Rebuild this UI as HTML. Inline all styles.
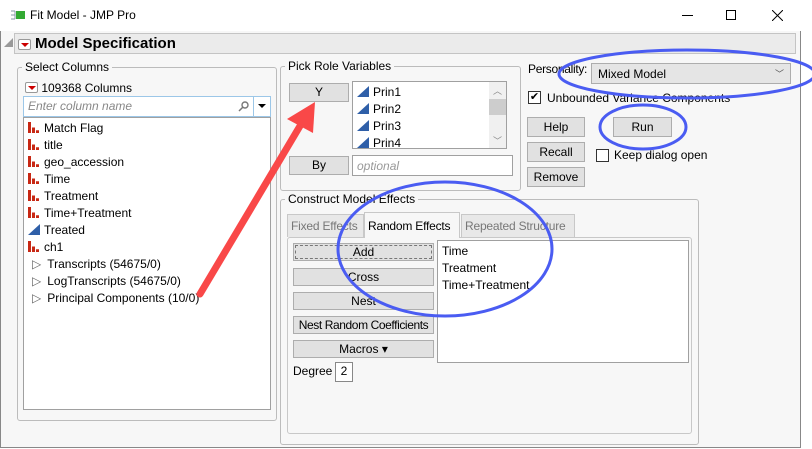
<!DOCTYPE html>
<html><head><meta charset="utf-8"><style>
*{margin:0;padding:0;box-sizing:border-box}
body{width:812px;height:449px;position:relative;overflow:hidden;background:#fff;font-family:"Liberation Sans",sans-serif;font-size:12px;color:#000;white-space:nowrap}
.a{position:absolute}
.win{left:0;top:0;width:801px;height:448px;background:#f7f7f7;border:1px solid #888;border-top:none}
.grp{position:absolute;border:1px solid #bcbcbc;border-radius:3px}
.lg{position:absolute;background:#f7f7f7;padding:0 3px;top:-8px;left:4px;white-space:nowrap}
.btn{position:absolute;background:#e1e1e1;border:1px solid #adadad;text-align:center;line-height:16px;font-size:12px;white-space:nowrap;overflow:hidden}
.box{position:absolute;background:#fff;border:1px solid #a0a0a0}
.bar{display:inline-block;width:11px;height:11px;margin-right:5px;vertical-align:-1px;background:linear-gradient(to right,#c82814 0 3px,transparent 3px 4px,#c82814 4px 7px,transparent 7px 8px,#c82814 8px 11px);clip-path:polygon(0 0,3px 0,3px 30%,4px 30%,4px 50%,7px 50%,7px 70%,8px 70%,8px 75%,11px 75%,11px 100%,0 100%)}
.tri{display:inline-block;width:12px;height:11px;margin-right:4px;vertical-align:-1px;background:#2f5fa8;clip-path:polygon(100% 0,100% 100%,0 100%)}
.row{height:17px;line-height:17px;white-space:nowrap}
.dd{display:inline-block;width:13px;height:11px;background:#fff;border:1px solid #999;border-radius:2px;position:relative;vertical-align:-1px}
.dd:after{content:"";position:absolute;left:2px;top:3px;border-left:4px solid transparent;border-right:4px solid transparent;border-top:4px solid #c00}
.tab{position:absolute;top:214px;height:23px;border:1px solid #c8c8c8;border-bottom:none;background:#e8e8e8;color:#777;line-height:22px;padding:0 3px;white-space:nowrap;overflow:hidden;letter-spacing:-0.2px}
</style></head><body>
<div class="a win"></div>
<div class="a" style="left:801px;top:0;width:11px;height:449px;background:#fff"></div>
<div class="a" style="left:0;top:0;width:801px;height:31px;background:#fff"></div>
<svg class="a" style="left:10px;top:8px" width="16" height="14"><path d="M1 3h4M1 7h4M1 11h4M5 3v8" stroke="#89a" fill="none"/><rect x="6" y="3" width="9" height="8" fill="#3a3"/></svg>
<div class="a" style="left:30px;top:8px;font-size:12px">Fit Model - JMP Pro</div>
<div class="a" style="left:682px;top:15px;width:11px;height:1px;background:#000"></div>
<div class="a" style="left:726px;top:10px;width:10px;height:10px;border:1px solid #000"></div>
<svg class="a" style="left:772px;top:10px" width="11" height="11"><path d="M0 0L11 11M11 0L0 11" stroke="#000"/></svg>
<div class="a" style="left:4px;top:38px;width:0;height:0;border-left:9px solid transparent;border-bottom:9px solid #999"></div>
<div class="a" style="left:14px;top:33px;width:782px;height:21px;background:#ebebeb;border:1px solid #c4c4c4"></div>
<div class="a" style="left:18px;top:38px"><span class="dd"></span></div>
<div class="a" style="left:35px;top:34px;font-size:15px;font-weight:bold;line-height:19px">Model Specification</div>
<div class="grp" style="left:17px;top:67px;width:260px;height:354px"><span class="lg">Select Columns</span></div>
<div class="a" style="left:25px;top:81px"><span class="dd"></span> 109368 Columns</div>
<div class="a" style="left:23px;top:96px;width:248px;height:21px;background:#fff;border:1px solid #9cc7e8"></div>
<div class="a" style="left:28px;top:99px;color:#888;font-style:italic">Enter column name</div>
<svg class="a" style="left:238px;top:100px" width="12" height="12"><circle cx="7" cy="5" r="3" stroke="#777" fill="none" stroke-width="1.4"/><path d="M5 7L1 11" stroke="#777" stroke-width="1.5"/></svg>
<div class="a" style="left:253px;top:96px;width:1px;height:21px;background:#9cc7e8"></div>
<div class="a" style="left:258px;top:104px;border-left:4px solid transparent;border-right:4px solid transparent;border-top:4px solid #000"></div>
<div class="box" style="left:23px;top:117px;width:248px;height:293px;padding:2px 0 0 4px">
<div class="row"><span class="bar"></span>Match Flag</div>
<div class="row"><span class="bar"></span>title</div>
<div class="row"><span class="bar"></span>geo_accession</div>
<div class="row"><span class="bar"></span>Time</div>
<div class="row"><span class="bar"></span>Treatment</div>
<div class="row"><span class="bar"></span>Time+Treatment</div>
<div class="row"><span class="tri"></span>Treated</div>
<div class="row"><span class="bar"></span>ch1</div>
<div class="row"><span style="color:#666;margin:0 6px 0 4px">▷</span>Transcripts (54675/0)</div>
<div class="row"><span style="color:#666;margin:0 6px 0 4px">▷</span>LogTranscripts (54675/0)</div>
<div class="row"><span style="color:#666;margin:0 6px 0 4px">▷</span>Principal Components (10/0)</div>
</div>
<div class="grp" style="left:280px;top:66px;width:241px;height:125px"><span class="lg">Pick Role Variables</span></div>
<div class="btn" style="left:289px;top:83px;width:60px;height:19px">Y</div>
<div class="box" style="left:352px;top:81px;width:155px;height:68px;padding:2px 0 0 4px">
<div class="row"><span class="tri"></span>Prin1</div>
<div class="row"><span class="tri"></span>Prin2</div>
<div class="row"><span class="tri"></span>Prin3</div>
<div class="row"><span class="tri"></span>Prin4</div>
</div>
<div class="a" style="left:489px;top:82px;width:17px;height:66px;background:#f0f0f0"></div>
<div class="a" style="left:489px;top:99px;width:17px;height:16px;background:#cdcdcd"></div>
<div class="a" style="left:493px;top:84px;color:#888;font-size:9px">︿</div>
<div class="a" style="left:493px;top:134px;color:#888;font-size:9px">﹀</div>
<div class="btn" style="left:289px;top:156px;width:60px;height:19px">By</div>
<div class="box" style="left:352px;top:155px;width:161px;height:21px;padding:3px 4px;color:#999;font-style:italic">optional</div>
<div class="a" style="left:528px;top:62px;letter-spacing:-0.3px">Personality:</div>
<div class="a" style="left:591px;top:63px;width:200px;height:21px;background:#e5e5e5;border:1px solid #adadad;padding:3px 6px">Mixed Model</div>
<div class="a" style="left:775px;top:67px;color:#555;font-size:9px">﹀</div>
<div class="a" style="left:528px;top:91px;width:13px;height:13px;background:#fff;border:1px solid #333;font-size:11px;line-height:11px;text-align:center">✔</div>
<div class="a" style="left:547px;top:91px">Unbounded Variance Components</div>
<div class="btn" style="left:527px;top:117px;width:58px;height:20px;line-height:18px">Help</div>
<div class="btn" style="left:527px;top:142px;width:58px;height:20px;line-height:18px">Recall</div>
<div class="btn" style="left:527px;top:167px;width:58px;height:20px;line-height:18px">Remove</div>
<div class="btn" style="left:613px;top:117px;width:59px;height:20px;line-height:18px">Run</div>
<div class="a" style="left:596px;top:149px;width:13px;height:13px;background:#fff;border:1px solid #333"></div>
<div class="a" style="left:614px;top:148px">Keep dialog open</div>
<div class="grp" style="left:280px;top:199px;width:419px;height:246px"><span class="lg">Construct Model Effects</span></div>
<div class="a" style="left:287px;top:237px;width:405px;height:197px;border:1px solid #c8c8c8;border-radius:3px"></div>
<div class="tab" style="left:287px;width:77px">Fixed Effects</div>
<div class="tab" style="left:364px;top:212px;height:26px;width:96px;background:#f7f7f7;color:#000;line-height:26px">Random Effects</div>
<div class="tab" style="left:461px;width:114px">Repeated Structure</div>
<div class="btn" style="left:293px;top:243px;width:141px;height:18px;outline:1px dashed #777;outline-offset:-3px">Add</div>
<div class="btn" style="left:293px;top:268px;width:141px;height:18px">Cross</div>
<div class="btn" style="left:293px;top:292px;width:141px;height:18px">Nest</div>
<div class="btn" style="left:293px;top:316px;width:141px;height:18px;letter-spacing:-0.4px">Nest Random Coefficients</div>
<div class="btn" style="left:293px;top:340px;width:141px;height:18px">Macros ▾</div>
<div class="a" style="left:293px;top:364px">Degree</div>
<div class="a" style="left:335px;top:362px;width:18px;height:20px;background:#fff;border:1px solid #888;text-align:center;line-height:17px">2</div>
<div class="box" style="left:437px;top:240px;width:252px;height:123px;padding:2px 0 0 4px">
<div class="row">Time</div><div class="row">Treatment</div><div class="row">Time+Treatment</div>
</div>
<svg class="a" style="left:0;top:0" width="812" height="449">
<g fill="none" stroke="#4a5cf2" stroke-width="3">
<ellipse cx="687" cy="74" rx="128" ry="24"/>
<ellipse cx="643" cy="127" rx="43" ry="22"/>
<ellipse cx="445" cy="249" rx="107" ry="67"/>
</g>
<path d="M200 294L300 126" stroke="#f94848" stroke-width="7" stroke-linecap="round"/>
<path d="M315 102L287 119L313 133Z" fill="#f94848"/>
</svg>
</body></html>
